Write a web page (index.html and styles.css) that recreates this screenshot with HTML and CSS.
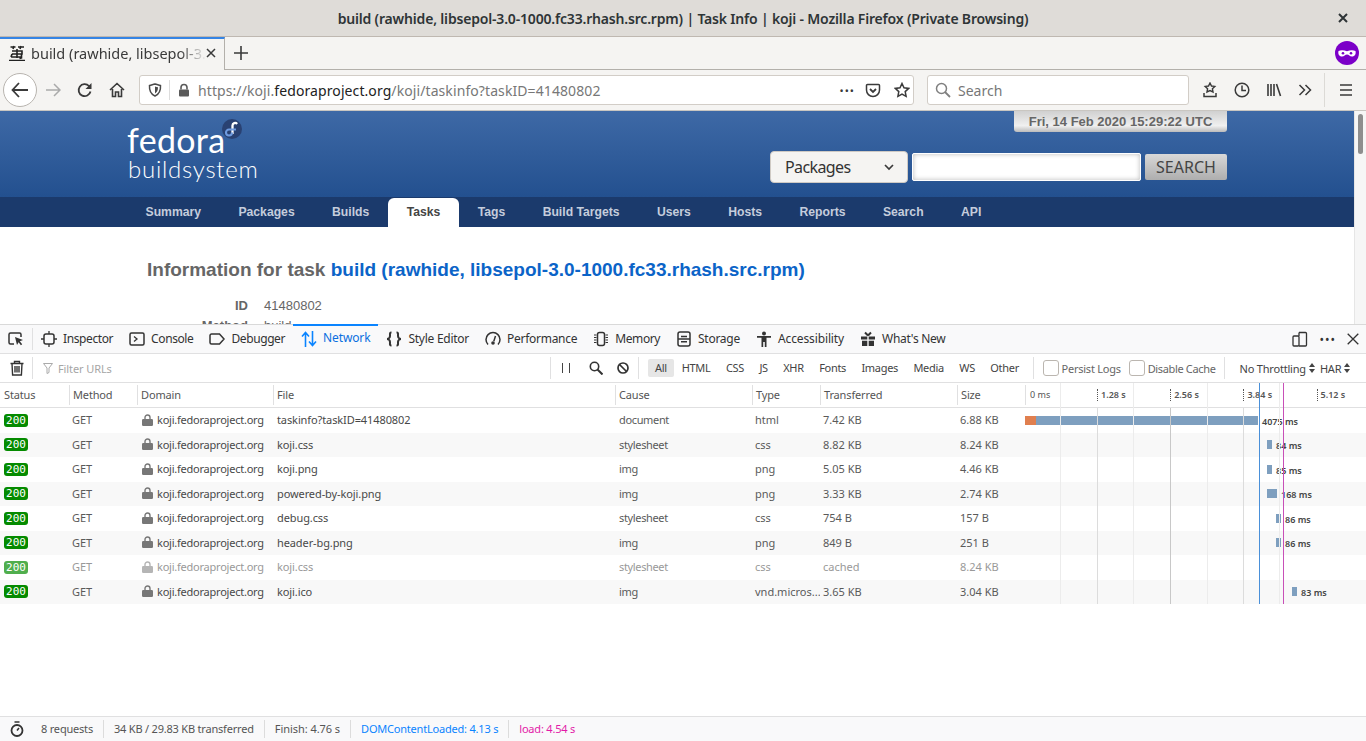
FILE: index.html
```html
<!DOCTYPE html>
<html lang="en">
<head>
    <meta charset="UTF-8">
    <title>build (rawhide, libsepol-3.0-1000.fc33.rhash.src.rpm) | Task Info | koji</title>
    <link rel="stylesheet" href="styles.css">
</head>
<body>

<div class="titlebar">
    <span class="title-text">build (rawhide, libsepol-3.0-1000.fc33.rhash.src.rpm) | Task Info | koji - Mozilla Firefox (Private Browsing)</span>
    <svg class="title-close" width="10" height="10" viewBox="0 0 10 10"><path d="M1 1l8 8M9 1l-8 8" stroke="#2e3436" stroke-width="2" fill="none"/></svg>
</div>

<div class="tabbar">
    <div class="tab">
        <svg class="favicon" width="16" height="16" viewBox="0 0 16 16"><path d="M1.500 2h5M9 2h6M5 1l-1 3M12 1l-1 3M3 6h10v3H3M8 4v9M2 12h11M3 9l-1 3M12.500 9v4l-2 .5M0 15.500h16" stroke="#222" stroke-width="1.600" fill="none"/></svg>
        <span class="tab-label">build (rawhide, libsepol-3.0-1000.fc33.rhash.src.rpm)</span>
        <svg width="10" height="10" viewBox="0 0 10 10"><path d="M1 1l8 8M9 1l-8 8" stroke="#3a3a3a" stroke-width="1.5" fill="none"/></svg>
    </div>
    <svg class="new-tab" width="16" height="16" viewBox="0 0 16 16"><path d="M8 1v14M1 8h14" stroke="#3a3a3a" stroke-width="1.6" fill="none"/></svg>
    <div class="private-badge">
        <svg width="24" height="24" viewBox="0 0 24 24"><circle cx="12" cy="12" r="12" fill="#7b00c8"/><path d="M3.500 10c2.500-1.300 5.500-1 8.500.3 3-1.300 6-1.600 8.500-.3.700 3-.6 5.500-3.500 5.500-2.400 0-3-2-5-2s-2.600 2-5 2c-2.900 0-4.200-2.500-3.500-5.500z" fill="#fff"/><circle cx="8" cy="12.200" r="1.300" fill="#7b00c8"/><circle cx="16" cy="12.200" r="1.300" fill="#7b00c8"/></svg>
    </div>
</div>

<div class="navbar">
    <div class="back-btn">
        <svg width="18" height="16" viewBox="0 0 18 16"><path d="M8 1L1.500 8 8 15M2 8h15" stroke="#3a3a3a" stroke-width="1.800" fill="none"/></svg>
    </div>
    <svg class="nav-forward" width="16" height="14" viewBox="0 0 16 14"><path d="M9 1l6 6-6 6M15 7H1" stroke="#aaa" stroke-width="1.500" fill="none"/></svg>
    <svg class="nav-reload" width="16" height="16" viewBox="0 0 16 16"><path d="M13.500 9.500A6 6 0 1 1 12 4l1.500 1.500" stroke="#3a3a3a" stroke-width="1.800" fill="none"/><path d="M14.500 1v6h-6z" fill="#3a3a3a"/></svg>
    <svg class="nav-home" width="16" height="16" viewBox="0 0 16 16"><path d="M1 8l7-6.500L15 8M3.500 7v7.500h3V10h3v4.500h3V7" stroke="#3a3a3a" stroke-width="1.600" fill="none"/></svg>

    <div class="urlbar">
        <svg width="14" height="14" viewBox="0 0 14 14"><path d="M1.500 2.500C3.500 2 5 1.500 7 1c2 .5 3.500 1 5.500 1.500C12.800 7 11.500 11 7 13 2.500 11 1.200 7 1.500 2.500z" stroke="#4a4a4a" stroke-width="1.500" fill="none"/><path d="M7 3.500c1 .3 2 .5 3 .8C10 7 9.200 9.300 7 10.500z" fill="#4a4a4a"/></svg>
        <span class="url-sep"></span>
        <svg width="14" height="14" viewBox="0 0 14 14"><path d="M4 6.500V4.500a3 3 0 0 1 6 0v2" stroke="#5a5a5a" stroke-width="1.600" fill="none"/><rect x="2" y="6.500" width="10" height="7" rx="1" fill="#5a5a5a"/></svg>
        <span class="url-text">https://koji.<b>fedoraproject.org</b>/koji/taskinfo?taskID=41480802</span>
        <span class="url-more">&bull;&bull;&bull;</span>
        <svg width="16" height="15" viewBox="0 0 16 15"><path d="M2.500 1.500h11a1 1 0 0 1 1 1V7a6.500 6.500 0 0 1-13 0V2.500a1 1 0 0 1 1-1z" stroke="#3a3a3a" stroke-width="1.500" fill="none"/><path d="M5 6l3 3 3-3" stroke="#3a3a3a" stroke-width="1.800" fill="none"/></svg>
        <svg class="url-star" width="16" height="16" viewBox="0 0 16 16"><path d="M8 1.500l2 4.300 4.700.6-3.500 3.200.9 4.700L8 12l-4.100 2.300.9-4.700L1.300 6.400 6 5.800z" stroke="#3a3a3a" stroke-width="1.500" fill="none"/></svg>
    </div>

    <div class="searchbar">
        <svg width="16" height="16" viewBox="0 0 16 16"><circle cx="6.500" cy="6.500" r="5" stroke="#808080" stroke-width="1.500" fill="none"/><path d="M10 10l5 5" stroke="#808080" stroke-width="1.800"/></svg>
        <span>Search</span>
    </div>

    <div class="nav-tools">
        <svg width="16" height="16" viewBox="0 0 16 16"><path d="M8 1l1.500 3 3.300.4-2.400 2.300.6 3.300L8 8.500 5 10l.6-3.300-2.400-2.300 3.300-.4z" stroke="#3a3a3a" stroke-width="1.400" fill="none"/><path d="M2 11v3.500h12V11" stroke="#3a3a3a" stroke-width="1.500" fill="none"/></svg>
        <svg width="16" height="16" viewBox="0 0 16 16"><circle cx="8" cy="8" r="6.800" stroke="#3a3a3a" stroke-width="1.500" fill="none"/><path d="M8 3.500V8.500H12" stroke="#3a3a3a" stroke-width="1.500" fill="none"/></svg>
        <svg width="16" height="16" viewBox="0 0 16 16"><path d="M2 2v12M5 2v12M8 2v12M10.500 2l4 12" stroke="#3a3a3a" stroke-width="1.600" fill="none"/></svg>
        <svg width="14" height="14" viewBox="0 0 14 14"><path d="M1.500 2l5 5-5 5M7.500 2l5 5-5 5" stroke="#3a3a3a" stroke-width="1.500" fill="none"/></svg>
        <span class="tool-sep"></span>
        <svg width="14" height="14" viewBox="0 0 14 14"><path d="M1 2h12M1 7h12M1 12h12" stroke="#3a3a3a" stroke-width="1.700" fill="none"/></svg>
    </div>
</div>

<div class="viewport">
    <div class="page">
        <div class="site-header">
            <div class="logo">
                <div class="logo-fedora">fedora</div>
                <div class="logo-sub">buildsystem</div>
                <svg class="logo-mark" width="20" height="20" viewBox="0 0 20 20"><circle cx="10" cy="10" r="10" fill="#294172"/><path d="M10.500 15V6.500a2.600 2.600 0 0 1 4.600-1.600" stroke="#fff" stroke-width="2.300" fill="none"/><path d="M10.500 10.500H7a3 3 0 1 0 3 3M10.500 10.500h3.500" stroke="#6f9be0" stroke-width="2.100" fill="none"/></svg>
            </div>
            <div class="header-side">
                <div class="clock">Fri, 14 Feb 2020 15:29:22 UTC</div>
                <div class="site-search">
                    <div class="site-select">
                        <span>Packages</span>
                        <svg width="10" height="7" viewBox="0 0 10 7"><path d="M1 1l4 4 4-4" stroke="#3a3a3a" stroke-width="1.700" fill="none"/></svg>
                    </div>
                    <div class="site-input"></div>
                    <div class="site-button">SEARCH</div>
                </div>
            </div>
        </div>
        <div class="main-nav">
            <a>Summary</a>
            <a>Packages</a>
            <a>Builds</a>
            <a class="active">Tasks</a>
            <a>Tags</a>
            <a>Build Targets</a>
            <a>Users</a>
            <a>Hosts</a>
            <a>Reports</a>
            <a>Search</a>
            <a>API</a>
        </div>
        <div class="content">
            <h4>Information for task <a>build (rawhide, libsepol-3.0-1000.fc33.rhash.src.rpm)</a></h4>
            <div class="info-row"><b>ID</b><span>41480802</span></div>
            <div class="info-row"><b>Method</b><span>build</span></div>
        </div>
    </div>
    <div class="page-scroll"><div class="page-thumb"></div></div>
</div>

<div class="devtools">
    <div class="dt-tabs">
        <svg class="dt-pick" width="16" height="16" viewBox="0 0 16 16"><path d="M6 13H2.500A1.500 1.500 0 0 1 1 11.500v-8A1.500 1.500 0 0 1 2.500 2h9A1.500 1.500 0 0 1 13 3.500V6" stroke="#333" stroke-width="1.500" fill="none"/><path d="M7 6l8 3-3.200 1.200 2.400 3-1.300 1-2.300-3L9 14z" fill="#333"/></svg>
        <span class="dt-sep"></span>
        <div class="dt-tab tight">
            <svg width="16" height="16" viewBox="0 0 16 16"><rect x="3" y="3" width="10" height="10" rx="2" stroke="#333" stroke-width="1.500" fill="none"/><path d="M8 0v3M8 13v3M0 8h3M13 8h3" stroke="#333" stroke-width="1.300"/></svg>
            <span>Inspector</span>
        </div>
        <div class="dt-tab tight">
            <svg width="16" height="16" viewBox="0 0 16 16"><rect x="1" y="2" width="14" height="12" rx="1.500" stroke="#333" stroke-width="1.500" fill="none"/><path d="M5 5.500L8 8l-3 2.500" stroke="#333" stroke-width="1.300" fill="none"/></svg>
            <span>Console</span>
        </div>
        <div class="dt-tab tight">
            <svg width="16" height="16" viewBox="0 0 16 16"><path d="M2.500 3h8L15 8l-4.500 5h-8A1.500 1.500 0 0 1 1 11.500v-7A1.500 1.500 0 0 1 2.500 3z" stroke="#333" stroke-width="1.500" fill="none"/></svg>
            <span>Debugger</span>
        </div>
        <div class="dt-tab selected loose">
            <svg width="16" height="16" viewBox="0 0 16 16"><path d="M4.500 16V2M1 5.500l3.500-4 3.500 4M11.500 0v14M8 10.500l3.500 4 3.500-4" stroke="#0a84ff" stroke-width="1.600" fill="none"/></svg>
            <span>Network</span>
        </div>
        <div class="dt-tab">
            <svg width="16" height="16" viewBox="0 0 16 16"><path d="M5.500 1.500C3.500 1.500 4 3 4 5S2 8 1 8c1 0 3 1 3 3s-.5 3.500 1.500 3.500M10.500 1.500c2 0 1.500 1.500 1.500 3.500s2 3 3 3c-1 0-3 1-3 3s.5 3.500-1.500 3.500" stroke="#333" stroke-width="2" fill="none"/></svg>
            <span>Style Editor</span>
        </div>
        <div class="dt-tab">
            <svg width="16" height="16" viewBox="0 0 16 16"><path d="M3 13.500A7 7 0 1 1 13 13.500" stroke="#333" stroke-width="1.500" fill="none"/><path d="M10.500 5L8.800 10.200" stroke="#333" stroke-width="1.500"/><circle cx="8" cy="12" r="1.800" fill="#333"/></svg>
            <span>Performance</span>
        </div>
        <div class="dt-tab tight">
            <svg width="16" height="16" viewBox="0 0 16 16"><rect x="4.500" y="1.500" width="7" height="13" rx="2" stroke="#333" stroke-width="1.500" fill="none"/><path d="M1 4h2.500M1 6.500h2.500M1 9h2.500M1 11.500h2.500M12.500 4H15M12.500 6.500H15M12.500 9H15M12.500 11.500H15" stroke="#333" stroke-width="1"/></svg>
            <span>Memory</span>
        </div>
        <div class="dt-tab">
            <svg width="16" height="16" viewBox="0 0 16 16"><rect x="2" y="1" width="12" height="14" rx="2" stroke="#333" stroke-width="1.500" fill="none"/><path d="M5 5.500h6M2 8h12M5 10.800h6" stroke="#333" stroke-width="1.400"/></svg>
            <span>Storage</span>
        </div>
        <div class="dt-tab loose">
            <svg width="16" height="16" viewBox="0 0 16 16"><circle cx="8" cy="2.500" r="2" fill="#333"/><path d="M1 5h14v1.800h-4.500V16H8.800v-5H7.200v5H5.500V6.800H1z" fill="#333"/></svg>
            <span>Accessibility</span>
        </div>
        <div class="dt-tab">
            <svg width="16" height="16" viewBox="0 0 16 16"><path d="M1 5.500h6.300v3H1zM8.700 5.500H15v3H8.700zM2 9.800h5.300V15H2zM8.700 9.800H14V15H8.700z" fill="#333"/><path d="M8 4.500L5 1.500M8 4.500l3-3" stroke="#333" stroke-width="2"/></svg>
            <span>What's New</span>
        </div>
        <div class="dt-right">
            <svg width="16" height="16" viewBox="0 0 16 16"><rect x="1" y="5" width="6" height="10" rx="1" stroke="#333" stroke-width="1.300" fill="none"/><path d="M7 1.500h6.500a1 1 0 0 1 1 1v11.500a1 1 0 0 1-1 1H7M7 1.500V5" stroke="#333" stroke-width="1.300" fill="none"/></svg>
            <span class="dt-more">&bull;&bull;&bull;</span>
            <svg width="12" height="12" viewBox="0 0 12 12"><path d="M.7.7l10.600 10.600M11.300.7L.7 11.300" stroke="#333" stroke-width="1.300" fill="none"/></svg>
        </div>
    </div>

    <div class="dt-toolbar">
        <svg class="dt-trash" width="16" height="16" viewBox="0 0 16 16"><path d="M1.500 3.500h13M5.500 3.500V1.500h5v2M3 3.500l.6 11.500h8.800L13 3.500M6 6v6.500M8 6v6.500M10 6v6.500" stroke="#333" stroke-width="1.400" fill="none"/></svg>
        <span class="dt-sep"></span>
        <svg class="filter-icon" width="10" height="11" viewBox="0 0 10 11"><path d="M.5.500h9L6 5v4.500L4 10.500V5z" stroke="#aaa" fill="none"/></svg>
        <span class="filter-text">Filter URLs</span>
        <span class="dt-sep pause-sep"></span>
        <svg class="tb-pause" width="10" height="10" viewBox="0 0 10 10"><path d="M1.500 0v10M8.500 0v10" stroke="#444" stroke-width="1"/></svg>
        <svg class="tb-search" width="14" height="14" viewBox="0 0 14 14"><circle cx="5.500" cy="5.500" r="4.200" stroke="#333" stroke-width="1.600" fill="none"/><path d="M8.500 8.500l5 5" stroke="#333" stroke-width="2"/></svg>
        <svg class="tb-block" width="12" height="12" viewBox="0 0 12 12"><circle cx="6" cy="6" r="5" stroke="#333" stroke-width="1.700" fill="none"/><path d="M2.500 2.500l7 7" stroke="#333" stroke-width="1.700"/></svg>
        <span class="dt-sep block-sep"></span>
        <div class="filters">
            <span class="chip">All</span>
            <span>HTML</span>
            <span>CSS</span>
            <span>JS</span>
            <span>XHR</span>
            <span>Fonts</span>
            <span>Images</span>
            <span>Media</span>
            <span>WS</span>
            <span>Other</span>
        </div>
        <span class="dt-sep other-sep"></span>
        <label class="check persist"><i></i>Persist Logs</label>
        <label class="check nocache"><i></i>Disable Cache</label>
        <span class="dt-sep cache-sep"></span>
        <span class="throttle">No Throttling<svg width="6" height="10" viewBox="0 0 6 10"><path d="M0 4l3-4 3 4zM0 6l3 4 3-4z" fill="#444"/></svg></span>
        <span class="throttle har">HAR<svg width="6" height="10" viewBox="0 0 6 10"><path d="M0 4l3-4 3 4zM0 6l3 4 3-4z" fill="#444"/></svg></span>
    </div>

    <div class="net-table">
        <div class="net-head">
            <div>Status</div>
            <div>Method</div>
            <div>Domain</div>
            <div>File</div>
            <div>Cause</div>
            <div>Type</div>
            <div>Transferred</div>
            <div>Size</div>
            <div class="wf-head">
                <span>0 ms</span>
                <span>1.28 s</span>
                <span>2.56 s</span>
                <span>3.84 s</span>
                <span>5.12 s</span>
            </div>
        </div>

        <div class="net-row">
            <div><span class="status">200</span></div>
            <div>GET</div>
            <div class="domain"><svg class="lock" width="11" height="12" viewBox="0 0 11 12"><path d="M3 5.500V3.500a2.500 2.500 0 0 1 5 0v2" stroke="currentColor" stroke-width="1.400" fill="none"/><rect y="5" width="11" height="7" rx="1.200" fill="currentColor"/></svg>koji.fedoraproject.org</div>
            <div class="file">taskinfo?taskID=41480802</div>
            <div class="cause">document</div>
            <div>html</div>
            <div>7.42 KB</div>
            <div>6.88 KB</div>
            <div class="wf"><i class="bar wait" style="margin-left:0;width:11px"></i><i class="bar" style="width:222px"></i><em>4075 ms</em></div>
        </div>
        <div class="net-row">
            <div><span class="status">200</span></div>
            <div>GET</div>
            <div class="domain"><svg class="lock" width="11" height="12" viewBox="0 0 11 12"><path d="M3 5.500V3.500a2.500 2.500 0 0 1 5 0v2" stroke="currentColor" stroke-width="1.400" fill="none"/><rect y="5" width="11" height="7" rx="1.200" fill="currentColor"/></svg>koji.fedoraproject.org</div>
            <div class="file">koji.css</div>
            <div class="cause">stylesheet</div>
            <div>css</div>
            <div>8.82 KB</div>
            <div>8.24 KB</div>
            <div class="wf"><i class="bar" style="margin-left:242px;width:5px"></i><em>84 ms</em></div>
        </div>
        <div class="net-row">
            <div><span class="status">200</span></div>
            <div>GET</div>
            <div class="domain"><svg class="lock" width="11" height="12" viewBox="0 0 11 12"><path d="M3 5.500V3.500a2.500 2.500 0 0 1 5 0v2" stroke="currentColor" stroke-width="1.400" fill="none"/><rect y="5" width="11" height="7" rx="1.200" fill="currentColor"/></svg>koji.fedoraproject.org</div>
            <div class="file">koji.png</div>
            <div class="cause">img</div>
            <div>png</div>
            <div>5.05 KB</div>
            <div>4.46 KB</div>
            <div class="wf"><i class="bar" style="margin-left:242px;width:5px"></i><em>85 ms</em></div>
        </div>
        <div class="net-row">
            <div><span class="status">200</span></div>
            <div>GET</div>
            <div class="domain"><svg class="lock" width="11" height="12" viewBox="0 0 11 12"><path d="M3 5.500V3.500a2.500 2.500 0 0 1 5 0v2" stroke="currentColor" stroke-width="1.400" fill="none"/><rect y="5" width="11" height="7" rx="1.200" fill="currentColor"/></svg>koji.fedoraproject.org</div>
            <div class="file">powered-by-koji.png</div>
            <div class="cause">img</div>
            <div>png</div>
            <div>3.33 KB</div>
            <div>2.74 KB</div>
            <div class="wf"><i class="bar" style="margin-left:242px;width:10px"></i><em>168 ms</em></div>
        </div>
        <div class="net-row">
            <div><span class="status">200</span></div>
            <div>GET</div>
            <div class="domain"><svg class="lock" width="11" height="12" viewBox="0 0 11 12"><path d="M3 5.500V3.500a2.500 2.500 0 0 1 5 0v2" stroke="currentColor" stroke-width="1.400" fill="none"/><rect y="5" width="11" height="7" rx="1.200" fill="currentColor"/></svg>koji.fedoraproject.org</div>
            <div class="file">debug.css</div>
            <div class="cause">stylesheet</div>
            <div>css</div>
            <div>754 B</div>
            <div>157 B</div>
            <div class="wf"><i class="bar" style="margin-left:251px;width:5px"></i><em>86 ms</em></div>
        </div>
        <div class="net-row">
            <div><span class="status">200</span></div>
            <div>GET</div>
            <div class="domain"><svg class="lock" width="11" height="12" viewBox="0 0 11 12"><path d="M3 5.500V3.500a2.500 2.500 0 0 1 5 0v2" stroke="currentColor" stroke-width="1.400" fill="none"/><rect y="5" width="11" height="7" rx="1.200" fill="currentColor"/></svg>koji.fedoraproject.org</div>
            <div class="file">header-bg.png</div>
            <div class="cause">img</div>
            <div>png</div>
            <div>849 B</div>
            <div>251 B</div>
            <div class="wf"><i class="bar" style="margin-left:251px;width:5px"></i><em>86 ms</em></div>
        </div>
        <div class="net-row cached">
            <div><span class="status">200</span></div>
            <div>GET</div>
            <div class="domain"><svg class="lock" width="11" height="12" viewBox="0 0 11 12"><path d="M3 5.500V3.500a2.500 2.500 0 0 1 5 0v2" stroke="currentColor" stroke-width="1.400" fill="none"/><rect y="5" width="11" height="7" rx="1.200" fill="currentColor"/></svg>koji.fedoraproject.org</div>
            <div class="file">koji.css</div>
            <div class="cause">stylesheet</div>
            <div>css</div>
            <div>cached</div>
            <div>8.24 KB</div>
            <div class="wf"></div>
        </div>
        <div class="net-row">
            <div><span class="status">200</span></div>
            <div>GET</div>
            <div class="domain"><svg class="lock" width="11" height="12" viewBox="0 0 11 12"><path d="M3 5.500V3.500a2.500 2.500 0 0 1 5 0v2" stroke="currentColor" stroke-width="1.400" fill="none"/><rect y="5" width="11" height="7" rx="1.200" fill="currentColor"/></svg>koji.fedoraproject.org</div>
            <div class="file">koji.ico</div>
            <div class="cause">img</div>
            <div>vnd.micros...</div>
            <div>3.65 KB</div>
            <div>3.04 KB</div>
            <div class="wf"><i class="bar" style="margin-left:267px;width:5px"></i><em>83 ms</em></div>
        </div>

        <div class="wf-lines">
            <i class="faint" style="left:35px"></i>
            <i class="mid" style="left:72px"></i>
            <i class="faint" style="left:108px"></i>
            <i class="dark" style="left:145px"></i>
            <i class="faint" style="left:182px"></i>
            <i class="mid" style="left:218px"></i>
            <i class="blue" style="left:234px"></i>
            <i class="faint" style="left:254px"></i>
            <i class="pink" style="left:258px"></i>
        </div>
    </div>

    <div class="dt-spacer"></div>

    <div class="dt-footer">
        <svg width="16" height="16" viewBox="0 0 16 16"><circle cx="8" cy="9.500" r="5.500" stroke="#333" stroke-width="1.800" fill="none"/><path d="M8 9.500l2-2.500M5.500 1h5" stroke="#333" stroke-width="1.600" fill="none"/></svg>
        <span class="first">8 requests</span>
        <span>34 KB / 29.83 KB transferred</span>
        <span class="finish">Finish: 4.76 s</span>
        <span class="dcl">DOMContentLoaded: 4.13 s</span>
        <span class="load">load: 4.54 s</span>
    </div>
</div>

</body>
</html>
```

FILE: styles.css
```css
* {
    box-sizing: border-box;
}
html, body {
    height: 100%;
}
body {
    margin: 0;
    height: 741px;
    overflow: hidden;
    display: flex;
    flex-direction: column;
    font-family: 'Noto Sans', sans-serif;
    color: #333;
    background-color: #fff;
}
svg {
    flex: none;
    display: block;
}

/* browser chrome */
.titlebar {
    height: 37px;
    flex: none;
    display: flex;
    align-items: center;
    justify-content: center;
    position: relative;
    background-color: #dfdcd8;
    border-bottom: 1px solid #bfb8b1;
}
.title-text {
    font-size: 14px;
    font-weight: 600;
    color: #2e3436;
    letter-spacing: -0.18px;
}
.title-close {
    position: absolute;
    right: 18px;
    top: 13px;
}
.tabbar {
    height: 33px;
    flex: none;
    display: flex;
    align-items: center;
    background-color: #f5f4f2;
    border-bottom: 1px solid #b3b0ab;
}
.tab {
    width: 225px;
    height: 33px;
    display: flex;
    align-items: center;
    padding: 0 8px 2px 9px;
    background-color: #f5f4f2;
    border-top: 2px solid #3584e4;
    border-right: 1px solid #b3b0ab;
}
.tab-label {
    flex: 1;
    margin-left: 6px;
    font-size: 14.5px;
    color: #3a3a3a;
    white-space: nowrap;
    overflow: hidden;
    -webkit-mask-image: linear-gradient(to right, #000 85%, transparent 100%);
    mask-image: linear-gradient(to right, #000 85%, transparent 100%);
}
.new-tab {
    margin-left: 8px;
}
.private-badge {
    margin-left: auto;
    margin-right: 7px;
}
.navbar {
    height: 41px;
    flex: none;
    display: flex;
    align-items: center;
    background-color: #f5f4f2;
    border-bottom: 1px solid #c9c6c1;
    padding-left: 3px;
}
.back-btn {
    width: 34px;
    height: 34px;
    display: flex;
    align-items: center;
    justify-content: center;
    background-color: #fff;
    border: 1px solid #b8b4af;
    border-radius: 50%;
}
.nav-forward {
    margin-left: 8px;
}
.nav-reload {
    margin-left: 16px;
}
.nav-home {
    margin-left: 16px;
}
.urlbar {
    width: 775px;
    height: 30px;
    margin-left: 14px;
    display: flex;
    align-items: center;
    gap: 7px;
    padding: 0 3px 0 8px;
    background-color: #fff;
    border: 1px solid #d2cdc7;
    border-radius: 3px;
}
.url-sep {
    width: 1px;
    height: 20px;
    background-color: #ddd;
}
.url-text {
    flex: 1;
    font-size: 14px;
    color: #777;
    white-space: nowrap;
    letter-spacing: 0.09px;
}
.url-text b {
    font-weight: 400;
    color: #222;
}
.url-more {
    font-size: 11px;
    color: #3a3a3a;
    letter-spacing: 1px;
    margin-right: 3px;
}
.url-star {
    margin-left: 6px;
}
.searchbar {
    width: 262px;
    height: 30px;
    margin-left: 13px;
    display: flex;
    align-items: center;
    gap: 7px;
    padding-left: 7px;
    font-size: 14px;
    color: #777;
    background-color: #fff;
    border: 1px solid #d2cdc7;
    border-radius: 3px;
}
.nav-tools {
    display: flex;
    align-items: center;
    gap: 16px;
    margin-left: 13px;
}
.tool-sep {
    width: 1px;
    height: 34px;
    background-color: #dcdad6;
    margin: 0 -2px 0 -4px;
}

/* page behind the devtools */
.viewport {
    height: 213px;
    flex: none;
    display: flex;
    overflow: hidden;
}
.page {
    flex: 1;
    min-width: 0;
    overflow: hidden;
    font-family: 'Liberation Sans', Arial, sans-serif;
}
.page-scroll {
    width: 12px;
    flex: none;
    padding: 3px 3px;
    background-color: #f6f6f6;
    border-left: 1px solid #e6e6e6;
}
.page-thumb {
    height: 40px;
    background-color: #8e8e8e;
    border-radius: 3px;
}
.site-header {
    height: 86px;
    display: flex;
    justify-content: space-between;
    padding: 0 127px 0 127px;
    background: linear-gradient(#3e69a6, #23508f);
}
.logo {
    position: relative;
    width: 140px;
    padding-top: 12px;
    color: #fff;
    font-family: 'Lato', sans-serif;
}
.logo-fedora {
    font-size: 34px;
    line-height: 34px;
    letter-spacing: 0.3px;
}
.logo-sub {
    font-size: 24px;
    font-weight: 300;
    line-height: 24px;
    margin-left: 1px;
    letter-spacing: 0.75px;
}
.logo-mark {
    position: absolute;
    left: 95px;
    top: 8px;
}
.header-side {
    width: 457px;
    display: flex;
    flex-direction: column;
    align-items: flex-end;
}
.clock {
    width: 213px;
    height: 21px;
    line-height: 21px;
    text-align: center;
    font-size: 13px;
    font-weight: bold;
    color: #666;
    background: linear-gradient(#d0d0d0, #f0f0f0 70%, #bbb);
    border-radius: 0 0 3px 3px;
}
.site-search {
    display: flex;
    align-items: center;
    margin-top: 19px;
    font-family: 'Noto Sans', sans-serif;
}
.site-select {
    width: 138px;
    height: 32px;
    display: flex;
    align-items: center;
    justify-content: space-between;
    padding: 0 13px 0 14px;
    font-size: 16px;
    letter-spacing: -0.6px;
    color: #333;
    background-color: #f5f4f2;
    border: 1px solid #cfcac4;
    border-radius: 4px;
}
.site-input {
    width: 229px;
    height: 28px;
    margin-left: 4px;
    background-color: #fff;
    box-shadow: inset 0 0 5px #bbb;
    border: 1px solid #fff;
    border-radius: 2px;
}
.site-button {
    width: 82px;
    height: 26px;
    margin-left: 4px;
    line-height: 26px;
    text-align: center;
    font-size: 16px;
    color: #444;
    background: linear-gradient(#d8d8d8, #aeaeae);
    border-radius: 2px;
}
.main-nav {
    height: 30px;
    display: flex;
    padding-left: 127px;
    background-color: #1b3a6c;
}
.main-nav a {
    padding: 0 18.7px;
    line-height: 30px;
    font-size: 12.2px;
    font-weight: bold;
    color: #c5cddc;
}
.main-nav a:first-child {
    padding-left: 18.5px;
}
.main-nav a.active {
    margin-top: 1px;
    line-height: 28px;
    color: #444;
    background-color: #fff;
    border-radius: 6px 6px 0 0;
}
.content {
    padding: 0 0 0 147px;
    color: #666;
}
.content h4 {
    margin: 31px 0 14px;
    font-size: 19px;
    line-height: 24px;
    font-weight: bold;
}
.content h4 a {
    color: #0b64c8;
}
.info-row {
    display: flex;
    font-size: 13px;
    line-height: 20px;
}
.info-row b {
    width: 101px;
    text-align: right;
}
.info-row span {
    margin-left: 16px;
}

/* devtools */
.devtools {
    flex: 1;
    display: flex;
    flex-direction: column;
    min-height: 0;
    font-size: 12px;
    background-color: #fff;
}
.dt-tabs {
    height: 30px;
    flex: none;
    display: flex;
    align-items: center;
    padding-left: 8px;
    background-color: #f9f9fa;
    border-top: 1px solid #d9d9d9;
    border-bottom: 1px solid #e0e0e1;
}
.dt-sep {
    width: 1px;
    height: 22px;
    flex: none;
    background-color: #e0e0e1;
}
.dt-pick + .dt-sep {
    margin-left: 8px;
}
.dt-tab {
    height: 29px;
    display: flex;
    align-items: center;
    gap: 6px;
    padding: 0 8px;
    color: #333;
    white-space: nowrap;
    letter-spacing: -0.27px;
}
.dt-tab.tight {
    letter-spacing: -0.4px;
}
.dt-tab.loose {
    letter-spacing: -0.12px;
}
.dt-tab span {
    padding-bottom: 2px;
}
.dt-tab.selected {
    color: #0a6fe0;
    margin-top: -1px;
    height: 30px;
    box-shadow: inset 0 2px 0 #0a84ff;
}
.dt-right {
    margin-left: auto;
    display: flex;
    align-items: center;
    gap: 11px;
    padding-right: 7px;
}
.dt-more {
    font-size: 12px;
    letter-spacing: 1px;
}
.dt-toolbar {
    height: 29px;
    flex: none;
    display: flex;
    align-items: center;
    padding-left: 9px;
    font-size: 11px;
    background-color: #fff;
    border-bottom: 1px solid #e0e0e1;
}
.dt-trash + .dt-sep {
    margin-left: 7px;
}
.filter-icon {
    margin-left: 10px;
}
.filter-text {
    width: 492px;
    margin-left: 5px;
    color: #a6a6a6;
    letter-spacing: -0.1px;
}
.pause-sep {
    margin-left: 0;
}
.tb-pause {
    margin-left: 10px;
}
.tb-search {
    margin-left: 18px;
}
.tb-block {
    margin-left: 14px;
}
.block-sep {
    margin-left: 9px;
}
.filters {
    display: flex;
    align-items: center;
    margin-left: 9px;
    color: #444;
    letter-spacing: -0.3px;
}
.filters span {
    height: 18px;
    line-height: 18px;
    padding: 0 7.7px;
    white-space: nowrap;
}
.filters .chip {
    width: 26px;
    padding: 0;
    text-align: center;
    background-color: #e6e6e6;
    border-radius: 2px;
}
.other-sep {
    margin-left: 6px;
}
.check {
    display: flex;
    align-items: center;
    margin-left: 9px;
    gap: 3px;
    color: #666;
    white-space: nowrap;
}
.check.persist {
    letter-spacing: -0.25px;
}
.check.nocache {
    margin-left: 8px;
    letter-spacing: -0.35px;
}
.check i {
    width: 16px;
    height: 16px;
    background-color: #fff;
    border: 1px solid #bbb6b0;
    border-radius: 3px;
}
.cache-sep {
    margin-left: 8px;
}
.throttle {
    display: flex;
    align-items: center;
    gap: 3px;
    margin-left: 15px;
    color: #444;
    letter-spacing: -0.2px;
    white-space: nowrap;
}
.throttle.har {
    margin-left: 5px;
}

/* request table */
.net-table {
    position: relative;
    flex: none;
}
.net-head, .net-row {
    display: grid;
    grid-template-columns: 69px 68px 136px 342px 137px 68px 137px 68px 1fr;
}
.net-head {
    height: 25px;
    align-items: center;
    font-size: 11px;
    color: #555;
    letter-spacing: -0.15px;
    border-bottom: 1px solid #e0e0e1;
}
.net-head > div {
    height: 20px;
    line-height: 20px;
    padding-left: 3px;
    border-left: 1px solid #e0e0e1;
}
.net-head > div:first-child {
    padding-left: 4px;
    border-left: none;
}
.net-head > div.wf-head {
    display: flex;
    padding-left: 4px;
    font-size: 9px;
    font-weight: 600;
    letter-spacing: 0;
    color: #555;
}
.wf-head span {
    width: 73.2px;
    height: 12px;
    line-height: 12px;
    margin-top: 4px;
    padding-left: 3px;
    border-left: 1px dotted #555;
}
.wf-head span:first-child {
    width: 67px;
    padding-left: 0;
    border-left: none;
    font-weight: 400;
}
.net-row {
    height: 24.5px;
    align-items: center;
    font-size: 11px;
    color: #5a5a5a;
    white-space: nowrap;
}
.net-row:nth-child(odd) {
    background-color: #f8f8f8;
}
.net-row > div {
    padding: 0 0 1px 3px;
    overflow: hidden;
}
.net-row > div:first-child {
    padding: 0 0 0 4px;
}
.net-row .domain {
    display: flex;
    align-items: center;
    gap: 4px;
    padding-left: 5px;
    color: #484848;
    letter-spacing: -0.23px;
}
.net-row .file {
    padding-left: 4px;
    color: #484848;
    letter-spacing: -0.1px;
}
.net-row .cause {
    padding-left: 4px;
    letter-spacing: -0.35px;
}
.lock {
    color: #777;
}
.status {
    display: block;
    width: 24px;
    height: 13px;
    line-height: 13px;
    text-align: center;
    font-family: 'DejaVu Sans Mono', monospace;
    font-size: 11px;
    color: #fff;
    background-color: #058b00;
    border-radius: 3px;
}
.net-row > .wf {
    display: flex;
    align-items: center;
    height: 24px;
    padding: 0;
    overflow: visible;
}
.bar {
    height: 9px;
    flex: none;
    background-color: #7e9fbf;
}
.bar.wait {
    background-color: #e07f4f;
}
.wf em {
    margin: 2px 0 0 4px;
    font-style: normal;
    font-size: 9px;
    font-weight: 600;
    color: #444;
}
.net-row.cached, .net-row.cached .domain, .net-row.cached .file {
    color: #999;
}
.cached .lock {
    color: #b5b5b5;
}
.cached .status {
    background-color: #50ae4d;
}
.wf-lines {
    position: absolute;
    left: 1025px;
    right: 0;
    top: 0;
    bottom: 0;
    pointer-events: none;
}
.wf-lines i {
    position: absolute;
    top: 0;
    bottom: 0;
    width: 1px;
}
.wf-lines .faint {
    background-color: #ececec;
}
.wf-lines .mid {
    top: 25px;
    background-color: #dcdcdc;
}
.wf-lines .dark {
    top: 25px;
    background-color: #c8c8c8;
}
.wf-lines .blue {
    background-color: #4a90d9;
}
.wf-lines .pink {
    background-color: #c84fb8;
}
.dt-spacer {
    flex: 1;
}
.dt-footer {
    height: 25px;
    flex: none;
    display: flex;
    align-items: center;
    padding-left: 9px;
    font-size: 11px;
    color: #555;
    letter-spacing: -0.2px;
    background-color: #f9f9fa;
    border-top: 1px solid #e0e0e1;
}
.dt-footer span {
    padding: 0 10px;
    border-left: 1px solid #dcdcdc;
    line-height: 18px;
    white-space: nowrap;
}
.dt-footer .first {
    margin-left: 6px;
    border-left: none;
}
.dt-footer .finish {
    letter-spacing: -0.05px;
}
.dt-footer .dcl {
    color: #0a84ff;
}
.dt-footer .load {
    color: #e31ba8;
}
```
